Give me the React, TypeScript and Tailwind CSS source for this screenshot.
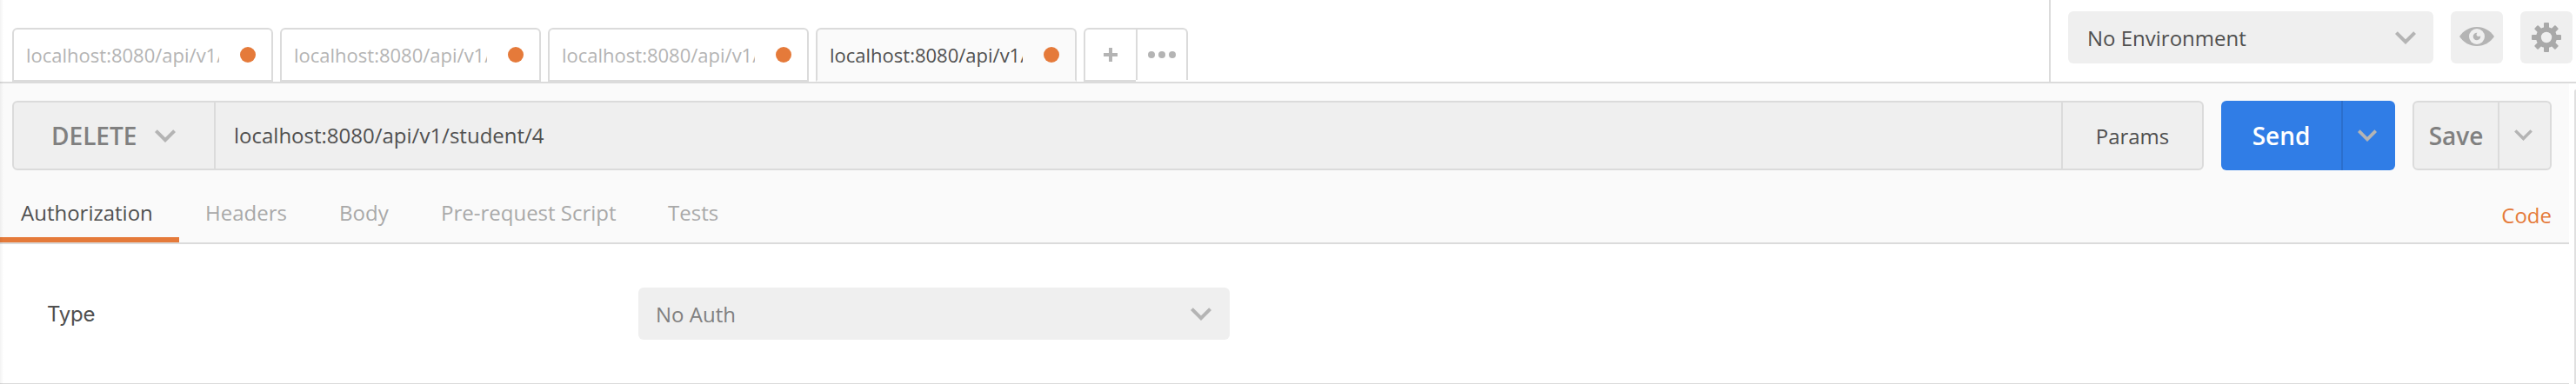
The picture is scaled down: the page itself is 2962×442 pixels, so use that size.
import React from "react";

const TABS = [
  { label: "localhost:8080/api/v1/student", active: false },
  { label: "localhost:8080/api/v1/student", active: false },
  { label: "localhost:8080/api/v1/student", active: false },
  { label: "localhost:8080/api/v1/student", active: true },
];

function Chevron({ className = "" }: { className?: string }) {
  return (
    <svg viewBox="0 0 24 15" className={`shrink-0 ${className}`} fill="none" stroke="#b4b4b4" strokeWidth="4">
      <path d="M1.400 1.600 12 12.200 22.600 1.600" />
    </svg>
  );
}

function EyeIcon() {
  return (
    <svg viewBox="0 0 40 24" className="h-6 w-10">
      <path d="M0 12C5 5 11.500 1 20 1s15 4 20 11c-5 7-11.500 11-20 11S5 19 0 12Z" fill="#b4b4b4" />
      <circle cx="20" cy="12" r="9" fill="#efefef" />
      <path
        d="M20.500 7.800c-1.200 1.200-1.200 2.700-.4 3.500s2.600.8 4.100.2A4.300 4.300 0 1 1 20.500 7.800Z"
        fill="#b4b4b4"
      />
    </svg>
  );
}

function GearIcon() {
  return (
    <svg viewBox="-17 -17 34 34" className="size-[34px]" fill="#a9a9a9">
      {[0, 45, 90, 135].map((a) => (
        <rect key={a} x="-3" y="-17" width="6" height="34" rx="1" transform={`rotate(${a})`} />
      ))}
      <circle r="12" />
      <circle r="6.200" fill="#efefef" />
    </svg>
  );
}

function RequestTab({ label, active }: { label: string; active: boolean }) {
  return (
    <div
      className={`flex h-[62px] w-[300px] items-center justify-between rounded-t-[6px] border-2 border-[#dbdbdb] pr-[18px] pl-[14px] ${
        active ? "border-b-[#fafafa] bg-[#fafafa] text-[#505050]" : "bg-white text-[#b4b4b4]"
      }`}
    >
      <span className="w-[222px] overflow-hidden text-[22px] leading-[30px] whitespace-nowrap">{label}</span>
      <span className="size-[18px] rounded-full bg-[#e57a3a]" />
    </div>
  );
}

function Header() {
  return (
    <header className="flex h-24 justify-between border-b-2 border-[#dbdbdb] bg-white">
      <div className="flex items-end gap-2 pl-[14px]">
        {TABS.map((t, i) => (
          <RequestTab key={i} label={t.label} active={t.active} />
        ))}
        <div className="flex h-[62px]">
          <button className="flex w-[60px] items-center justify-center rounded-tl-[6px] border-2 border-r-0 border-[#dbdbdb]">
            <svg viewBox="0 0 16 16" className="size-4" fill="#b4b4b4">
              <path d="M6 0h4v6h6v4h-6v6H6v-6H0V6h6z" />
            </svg>
          </button>
          <button className="flex h-[60px] w-[60px] items-center justify-center rounded-tr-[6px] border-2 border-b-0 border-[#dbdbdb]">
            <svg viewBox="0 0 32 8" className="h-2 w-8" fill="#b4b4b4">
              <circle cx="4" cy="4" r="4" />
              <circle cx="16" cy="4" r="4" />
              <circle cx="28" cy="4" r="4" />
            </svg>
          </button>
        </div>
      </div>
      <div className="flex w-[606px] gap-5 border-l-2 border-[#dbdbdb] pt-[13px] pl-5">
        <button className="flex h-[60px] w-[420px] items-center justify-between rounded-[6px] bg-[#efefef] pr-5 pl-[22px] text-2xl text-[#505050]">
          <span className="pt-0.5">No Environment</span>
          <Chevron className="h-[15px] w-6" />
        </button>
        <button className="flex size-[60px] items-center justify-center rounded-[6px] bg-[#efefef] pb-0.5">
          <EyeIcon />
        </button>
        <button className="flex size-[60px] items-center justify-center rounded-[6px] bg-[#efefef]">
          <GearIcon />
        </button>
      </div>
    </header>
  );
}

function RequestBar() {
  return (
    <div className="flex h-20 gap-5 pr-5 pl-[14px]">
      <div className="flex w-[2520px] rounded-[6px] border-2 border-[#dbdbdb] bg-[#efefef]">
        <button className="flex w-[232px] items-center gap-[21px] border-r-2 border-[#dbdbdb] pl-[43px] text-[28px] font-semibold text-[#808080]">
          <span className="w-[98px]">DELETE</span>
          <Chevron className="h-[15px] w-6" />
        </button>
        <div className="flex flex-1 items-center pl-[21px] text-2xl text-[#505050]">localhost:8080/api/v1/student/4</div>
        <button className="flex w-[162px] items-center justify-center border-l-2 border-[#dbdbdb] pt-0.5 text-2xl text-[#505050]">
          Params
        </button>
      </div>
      <div className="flex w-[200px] overflow-hidden rounded-[6px] bg-[#307de6]">
        <button className="flex w-[138px] items-center justify-center text-[28px] font-semibold text-white">Send</button>
        <button className="flex flex-1 items-center justify-center border-l-2 border-[#2b6fcd] pr-1">
          <Chevron className="h-[14px] w-[22px]" />
        </button>
      </div>
      <div className="flex w-[160px] rounded-[6px] border-2 border-[#dbdbdb] bg-[#efefef]">
        <button className="flex w-24 items-center justify-center text-[28px] font-semibold text-[#808080]">Save</button>
        <button className="flex flex-1 items-center justify-center border-l-2 border-[#dbdbdb] pr-1 pb-0.5">
          <Chevron className="h-[13px] w-[21px]" />
        </button>
      </div>
    </div>
  );
}

function SectionTabs() {
  return (
    <nav className="flex h-[83px] items-start justify-between pr-5 text-2xl text-[#a9a9a9]">
      <div className="flex h-[83px]">
        <span className="w-[206px] border-b-[6px] border-[#e57a3a] pt-8 pl-6 leading-[33px] text-[#505050]">
          Authorization
        </span>
        <span className="w-[154px] pt-8 pl-[30px] leading-[33px]">Headers</span>
        <span className="w-[117px] pt-8 pl-[30px] leading-[33px]">Body</span>
        <span className="w-[261px] pt-8 pl-[30px] leading-[33px]">Pre-request Script</span>
        <span className="pt-8 pl-[30px] leading-[33px]">Tests</span>
      </div>
      <span className="pt-[35px] leading-[33px] text-[#e57a3a]">Code</span>
    </nav>
  );
}

export default function App() {
  return (
    <div className="relative h-[442px] w-[2962px] overflow-hidden bg-white font-['Open_Sans','Noto_Sans',sans-serif]">
      <Header />
      <div className="flex h-[346px] justify-between">
        <main className="w-[2954px] border-b border-[#dbdbdb]">
          <section className="h-[185px] border-b-2 border-[#dbdbdb] bg-[#fafafa] pt-5">
            <RequestBar />
            <SectionTabs />
          </section>
          <section className="flex pt-[50px] text-2xl">
            <label className="flex h-[60px] w-[734px] items-center pt-0.5 pl-[54px] font-['Inter',sans-serif] tracking-[-0.2px] text-[#505050]">
              Type
            </label>
            <button className="flex h-[60px] w-[680px] items-center justify-between rounded-[6px] bg-[#efefef] pr-[21px] pl-5 text-[#808080]">
              <span className="pt-0.5">No Auth</span>
              <Chevron className="h-[15px] w-6" />
            </button>
          </section>
        </main>
        <aside className="mt-[7px] w-0.5 rounded-tl-[2px] bg-[#e0e0e0]" />
      </div>
      <div className="pointer-events-none absolute inset-y-0 left-0 w-1 bg-gradient-to-r from-black/5 to-transparent" />
    </div>
  );
}
